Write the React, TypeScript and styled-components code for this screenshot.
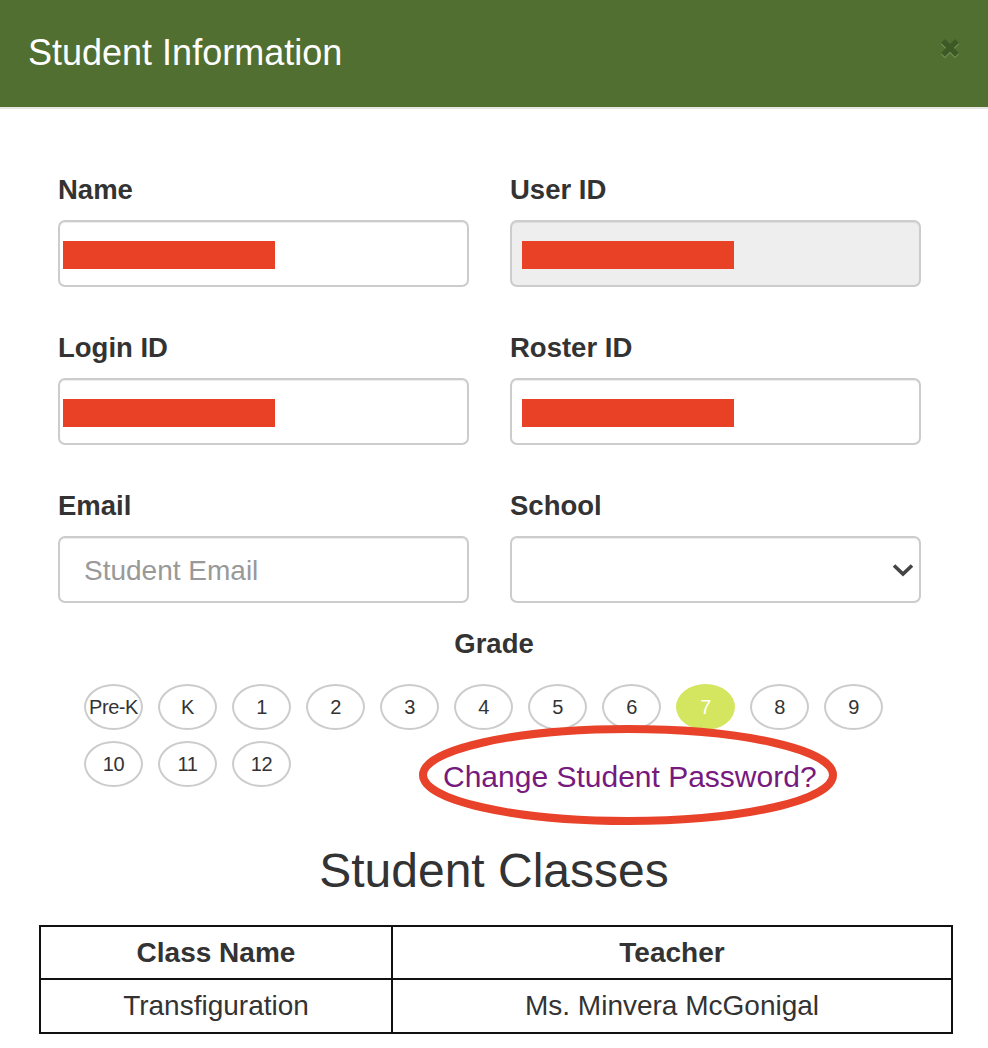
import React from "react";
import styled, { createGlobalStyle } from "styled-components";

const GlobalStyle = createGlobalStyle`
  html, body {
    margin: 0;
    padding: 0;
    background: #ffffff;
    font-family: "Liberation Sans", Arial, Helvetica, sans-serif;
    color: #333333;
  }
  * { box-sizing: border-box; }
`;

const Modal = styled.div`
  width: 988px;
  min-height: 1048px;
  background: #ffffff;
`;

const Header = styled.header`
  height: 109px;
  background: #516f31;
  border-bottom: 2px solid #e5e5e5;
  display: flex;
  align-items: center;
  justify-content: space-between;
  padding: 0 26px 2px 28px;
`;

const Title = styled.h2`
  margin: 0;
  font-size: 36px;
  line-height: 40px;
  font-weight: 400;
  color: #ffffff;
`;

const CloseButton = styled.button`
  border: 0;
  background: transparent;
  padding: 0;
  width: 24px;
  height: 24px;
  display: flex;
  align-items: center;
  justify-content: center;
  cursor: pointer;
  margin-top: -10px;
`;

const Body = styled.main`
  padding: 66px 0 0;
`;

const FormGrid = styled.div`
  display: grid;
  grid-template-columns: 411px 411px;
  column-gap: 41px;
  row-gap: 46px;
  margin: 0 67px 0 58px;
`;

const Field = styled.div`
  display: flex;
  flex-direction: column;
  gap: 15px;
`;

const Label = styled.label`
  font-size: 27.5px;
  line-height: 30px;
  font-weight: 700;
  color: #333333;
`;

const InputBox = styled.div<{ $disabled?: boolean }>`
  position: relative;
  height: 67px;
  border: 2px solid #cccccc;
  border-radius: 7px;
  background: ${(p) => (p.$disabled ? "#eeeeee" : "#ffffff")};
  box-shadow: inset 0 1px 1px rgba(0, 0, 0, 0.075);
  display: flex;
  align-items: center;
  padding: 0 24px;
`;

const Redacted = styled.span<{ $inset: number }>`
  display: block;
  width: 212px;
  height: 28px;
  background: #e94126;
  margin-left: ${(p) => p.$inset - 24}px;
  margin-top: 2px;
`;

const Placeholder = styled.span`
  font-size: 28px;
  color: #999999;
  margin-top: 3px;
`;

const SelectBox = styled(InputBox)`
  justify-content: flex-end;
  padding-right: 5px;
`;

const GradeTitle = styled.div`
  margin-top: 26px;
  text-align: center;
  font-size: 27.5px;
  line-height: 30px;
  font-weight: 700;
  color: #333333;
`;

const GradeList = styled.div`
  display: flex;
  flex-wrap: wrap;
  align-items: flex-start;
  gap: 11px 15px;
  width: 830px;
  margin: 25px 0 0 84px;
`;

const Pill = styled.button<{ $active?: boolean }>`
  width: 59px;
  height: 46px;
  border-radius: 50%;
  border: 2px solid ${(p) => (p.$active ? "#d4e55f" : "#cccccc")};
  background: ${(p) => (p.$active ? "#d4e55f" : "#ffffff")};
  color: ${(p) => (p.$active ? "#ffffff" : "#333333")};
  font-family: "Liberation Sans", Arial, sans-serif;
  font-size: 20px;
  padding: 0;
  display: flex;
  align-items: center;
  justify-content: center;
  white-space: nowrap;
  letter-spacing: -0.4px;
`;

const PasswordLink = styled.a`
  position: relative;
  display: inline-block;
  margin-left: 137px;
  margin-top: 19px;
  font-size: 30px;
  line-height: 33px;
  color: #771a7e;
  text-decoration: none;
  white-space: nowrap;
`;

const Annotation = styled.svg`
  position: absolute;
  left: -25px;
  top: -36px;
  width: 420px;
  height: 102px;
  overflow: visible;
  pointer-events: none;
`;

const SectionTitle = styled.h1`
  margin: 51px 0 0;
  text-align: center;
  font-size: 48px;
  line-height: 53px;
  font-weight: 400;
  color: #333333;
`;

const Table = styled.table`
  margin: 28px 35px 0 39px;
  width: 914px;
  border-collapse: collapse;
  border: 2px solid #111111;
`;

const HeadCell = styled.th<{ $w?: number }>`
  width: ${(p) => (p.$w ? `${p.$w}px` : "auto")};
  height: 53px;
  border: 2px solid #111111;
  font-size: 28px;
  font-weight: 700;
  color: #333333;
  text-align: center;
  padding: 0;
`;

const Cell = styled.td`
  height: 54px;
  border: 2px solid #111111;
  font-size: 28px;
  color: #333333;
  text-align: center;
  padding: 0;
`;

const grades = ["Pre-K", "K", "1", "2", "3", "4", "5", "6", "7", "8", "9", "10", "11", "12"];

export default function App() {
  return (
    <>
      <GlobalStyle />
      <Modal>
        <Header>
          <Title>Student Information</Title>
          <CloseButton aria-label="Close">
            <svg width="24" height="24" viewBox="0 0 24 24">
              <path d="M5 6 L19 20 M19 6 L5 20" stroke="#86a26a" strokeWidth="5.5" strokeLinecap="butt" />
              <path d="M5 5 L19 19 M19 5 L5 19" stroke="#3d5926" strokeWidth="5.5" strokeLinecap="butt" />
            </svg>
          </CloseButton>
        </Header>
        <Body>
          <FormGrid>
            <Field>
              <Label>Name</Label>
              <InputBox>
                <Redacted $inset={3} />
              </InputBox>
            </Field>
            <Field>
              <Label>User ID</Label>
              <InputBox $disabled>
                <Redacted $inset={10} />
              </InputBox>
            </Field>
            <Field>
              <Label>Login ID</Label>
              <InputBox>
                <Redacted $inset={3} />
              </InputBox>
            </Field>
            <Field>
              <Label>Roster ID</Label>
              <InputBox>
                <Redacted $inset={10} />
              </InputBox>
            </Field>
            <Field>
              <Label>Email</Label>
              <InputBox>
                <Placeholder>Student Email</Placeholder>
              </InputBox>
            </Field>
            <Field>
              <Label>School</Label>
              <SelectBox>
                <svg width="22" height="14" viewBox="0 0 22 14">
                  <path d="M2 2.5 L11 11 L20 2.5" stroke="#444444" strokeWidth="3.6" fill="none" />
                </svg>
              </SelectBox>
            </Field>
          </FormGrid>

          <GradeTitle>Grade</GradeTitle>
          <GradeList>
            {grades.map((g) => (
              <Pill key={g} $active={g === "7"}>
                {g}
              </Pill>
            ))}
            <PasswordLink href="#">
              Change Student Password?
              <Annotation viewBox="0 0 420 102">
                <ellipse cx="210" cy="51" rx="205" ry="46" fill="none" stroke="#e8432a" strokeWidth="8" />
              </Annotation>
            </PasswordLink>
          </GradeList>

          <SectionTitle>Student Classes</SectionTitle>
          <Table>
            <thead>
              <tr>
                <HeadCell $w={352}>Class Name</HeadCell>
                <HeadCell>Teacher</HeadCell>
              </tr>
            </thead>
            <tbody>
              <tr>
                <Cell>Transfiguration</Cell>
                <Cell>Ms. Minvera McGonigal</Cell>
              </tr>
            </tbody>
          </Table>
        </Body>
      </Modal>
    </>
  );
}
